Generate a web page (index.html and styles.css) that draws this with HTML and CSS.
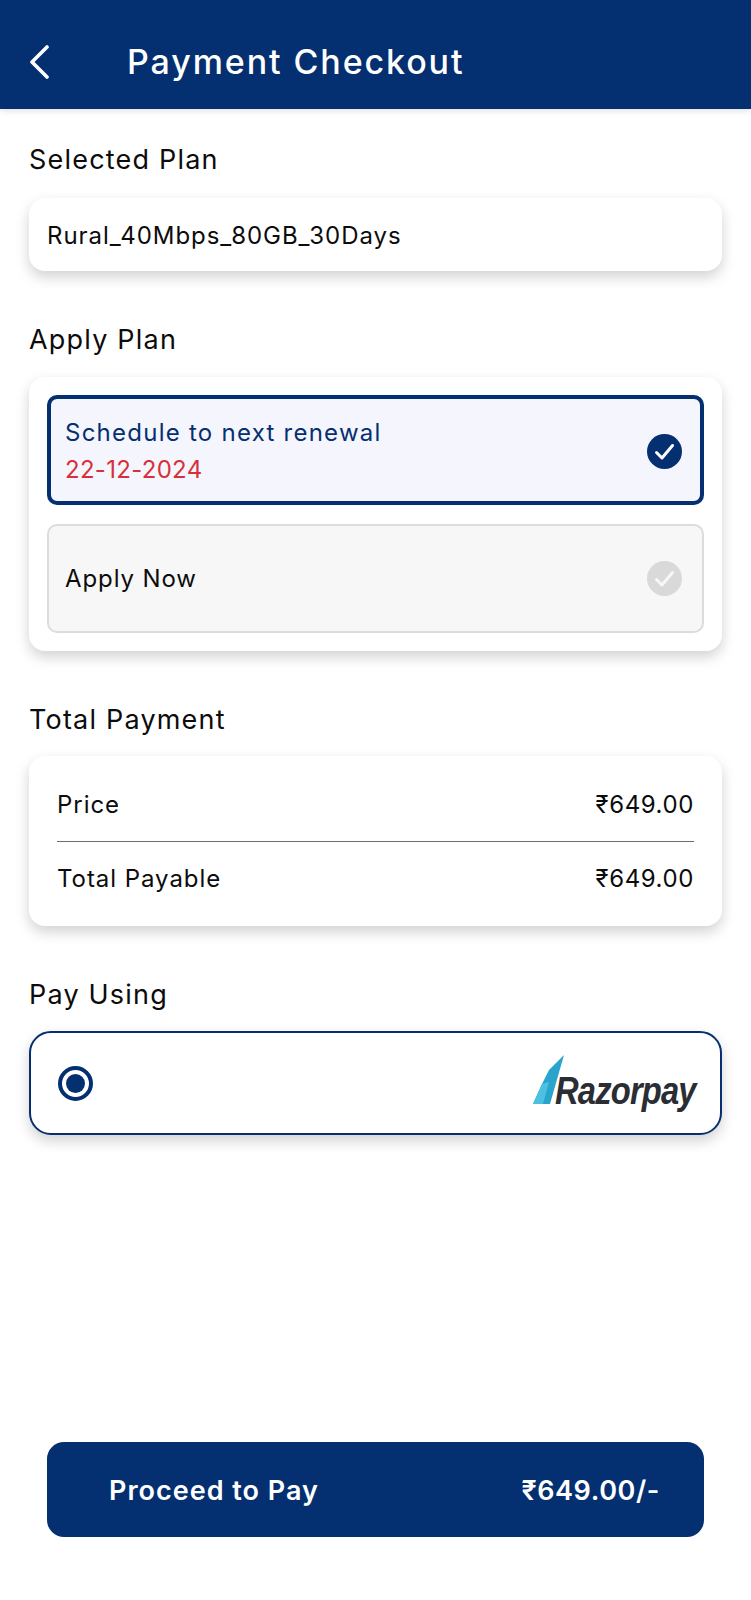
FILE: index.html
```html
<!DOCTYPE html>
<html lang="en">

<head>
  <meta charset="UTF-8">
  <meta name="viewport" content="width=device-width, initial-scale=1.0">
  <title>Payment Checkout</title>
  <link rel="stylesheet" href="styles.css">
</head>

<body>
  <div class="page">
    <header class="header">
      <svg class="header__back" viewBox="0 0 20 34" width="20" height="34">
        <path d="M18 2 L3 17 L18 32" fill="none" stroke="#fff" stroke-width="3.6" stroke-linecap="round" stroke-linejoin="round" />
      </svg>
      <div class="header__title">Payment Checkout</div>
    </header>

    <main class="content">
      <section class="section">
        <div class="section__label">Selected Plan</div>
        <div class="card card_plan">Rural_40Mbps_80GB_30Days</div>
      </section>

      <section class="section">
        <div class="section__label">Apply Plan</div>
        <div class="card card_options">
          <div class="option option_active">
            <div>
              <div class="option__title">Schedule to next renewal</div>
              <div class="option__date">22-12-2024</div>
            </div>
            <svg class="option__check" viewBox="0 0 35 35" width="35" height="35">
              <circle cx="17.5" cy="17.5" r="17.5" fill="#042f70" />
              <path d="M9.5 18.5 L15 24 L25.5 11.5" fill="none" stroke="#fff" stroke-width="3" stroke-linecap="round" stroke-linejoin="round" />
            </svg>
          </div>
          <div class="option">
            <div class="option__title">Apply Now</div>
            <svg class="option__check" viewBox="0 0 35 35" width="35" height="35">
              <circle cx="17.5" cy="17.5" r="17.5" fill="#d9d9d9" />
              <path d="M9.5 18.5 L15 24 L25.5 11.5" fill="none" stroke="#f7f7f7" stroke-width="3" stroke-linecap="round" stroke-linejoin="round" />
            </svg>
          </div>
        </div>
      </section>

      <section class="section">
        <div class="section__label">Total Payment</div>
        <div class="card card_total">
          <div class="total-row total-row_line">
            <span>Price</span>
            <span class="total-row__amount">₹649.00</span>
          </div>
          <div class="total-row">
            <span>Total Payable</span>
            <span class="total-row__amount">₹649.00</span>
          </div>
        </div>
      </section>

      <section class="section">
        <div class="section__label">Pay Using</div>
        <div class="card card_pay">
          <div class="radio"><div class="radio__dot"></div></div>
          <div class="razorpay">
            <svg class="razorpay__mark" viewBox="0 0 32 50" width="32" height="50">
              <polygon points="0,49 17,49 31,0 16,15 9,29" fill="#2aa3cd" />
              <polygon points="0,49 10,49 16,27 9,29" fill="#4cc0e0" />
            </svg>
            <span class="razorpay__name">Razorpay</span>
          </div>
        </div>
      </section>
    </main>

    <div class="footer">
      <button class="pay-btn">
        <span>Proceed to Pay</span>
        <span class="pay-btn__amount">₹649.00/-</span>
      </button>
    </div>
  </div>
</body>

</html>
```

FILE: styles.css
```css
* {
  box-sizing: border-box;
}

body {
  margin: 0;
  background-color: #fff;
  color: #0c0c0c;
  font-family: "Inter", "Liberation Sans", sans-serif;
}

.page {
  display: flex;
  flex-direction: column;
  min-height: 1600px;
}

.header {
  display: flex;
  align-items: center;
  height: 109px;
  padding: 14px 0 0 29px;
  background-color: #042f70;
  box-shadow: 0 2px 6px rgba(0, 0, 0, .12);
}

.header__back {
  flex: none;
}

.header__title {
  margin-left: 78px;
  color: #fff;
  font-size: 34px;
  font-weight: 500;
  letter-spacing: 1.9px;
}

.content {
  flex: 1;
  padding: 35px 29px 0;
}

.section {
  margin-bottom: 53px;
}

.section__label {
  margin-bottom: 22px;
  font-size: 27px;
  line-height: 32px;
  letter-spacing: 1.2px;
}

.card {
  width: 693px;
  background-color: #fff;
  border-radius: 16px;
  box-shadow: 0 6px 14px rgba(0, 0, 0, .18);
}

.card_plan {
  height: 73px;
  padding: 2px 18px 0;
  font-size: 24px;
  line-height: 71px;
  letter-spacing: .95px;
}

.card_options {
  display: flex;
  flex-direction: column;
  gap: 19px;
  margin: -1px 0 1px;
  padding: 18px;
}

.option {
  display: flex;
  align-items: center;
  justify-content: space-between;
  height: 109px;
  padding: 0 20px 0 16px;
  background-color: #f7f7f7;
  border: 2px solid #dcdcdc;
  border-radius: 10px;
}

.option_active {
  height: 110px;
  padding: 2px 18px 0 14px;
  background-color: #f5f6fd;
  border: 4px solid #042f70;
}

.option__title {
  font-size: 24px;
  letter-spacing: .9px;
}

.option_active .option__title {
  color: #042f70;
  letter-spacing: 1.25px;
}

.option__date {
  margin-top: 8px;
  color: #d8303a;
  font-size: 24px;
  letter-spacing: .3px;
}

.option__check {
  flex: none;
}

.card_total {
  margin-top: -2px;
  padding: 12px 28px 11px;
}

.total-row {
  display: flex;
  justify-content: space-between;
  align-items: center;
  height: 73px;
  font-size: 24px;
  letter-spacing: .95px;
}

.total-row_line {
  height: 74px;
  border-bottom: 1px solid #6d6d6d;
}

.total-row__amount {
  letter-spacing: .6px;
}

.card_pay {
  display: flex;
  align-items: center;
  justify-content: space-between;
  height: 104px;
  margin-top: -2px;
  padding: 0 22px 0 27px;
  border: 2px solid #042f70;
  border-radius: 22px;
}

.radio {
  display: flex;
  align-items: center;
  justify-content: center;
  width: 35px;
  height: 35px;
  border: 4px solid #042f70;
  border-radius: 50%;
}

.radio__dot {
  width: 19px;
  height: 19px;
  background-color: #042f70;
  border-radius: 50%;
}

.razorpay {
  display: flex;
  align-items: flex-end;
  margin-top: -7px;
}

.razorpay__mark {
  flex: none;
}

.razorpay__name {
  display: block;
  width: 143px;
  margin: 0 0 -6px -10px;
  color: #2a2d33;
  font-family: "Liberation Sans", sans-serif;
  font-size: 39px;
  font-style: italic;
  font-weight: 700;
  line-height: 40px;
  letter-spacing: -1px;
  white-space: nowrap;
  transform: scaleX(.84);
  transform-origin: left center;
}

.footer {
  padding: 0 47px 63px;
}

.pay-btn {
  display: flex;
  align-items: center;
  justify-content: space-between;
  width: 657px;
  height: 95px;
  padding: 2px 44px 0 62px;
  background-color: #042f70;
  border: none;
  border-radius: 17px;
  color: #fff;
  font-family: inherit;
  font-size: 27px;
  font-weight: 600;
  letter-spacing: 1px;
}

.pay-btn__amount {
  letter-spacing: .6px;
}
```
